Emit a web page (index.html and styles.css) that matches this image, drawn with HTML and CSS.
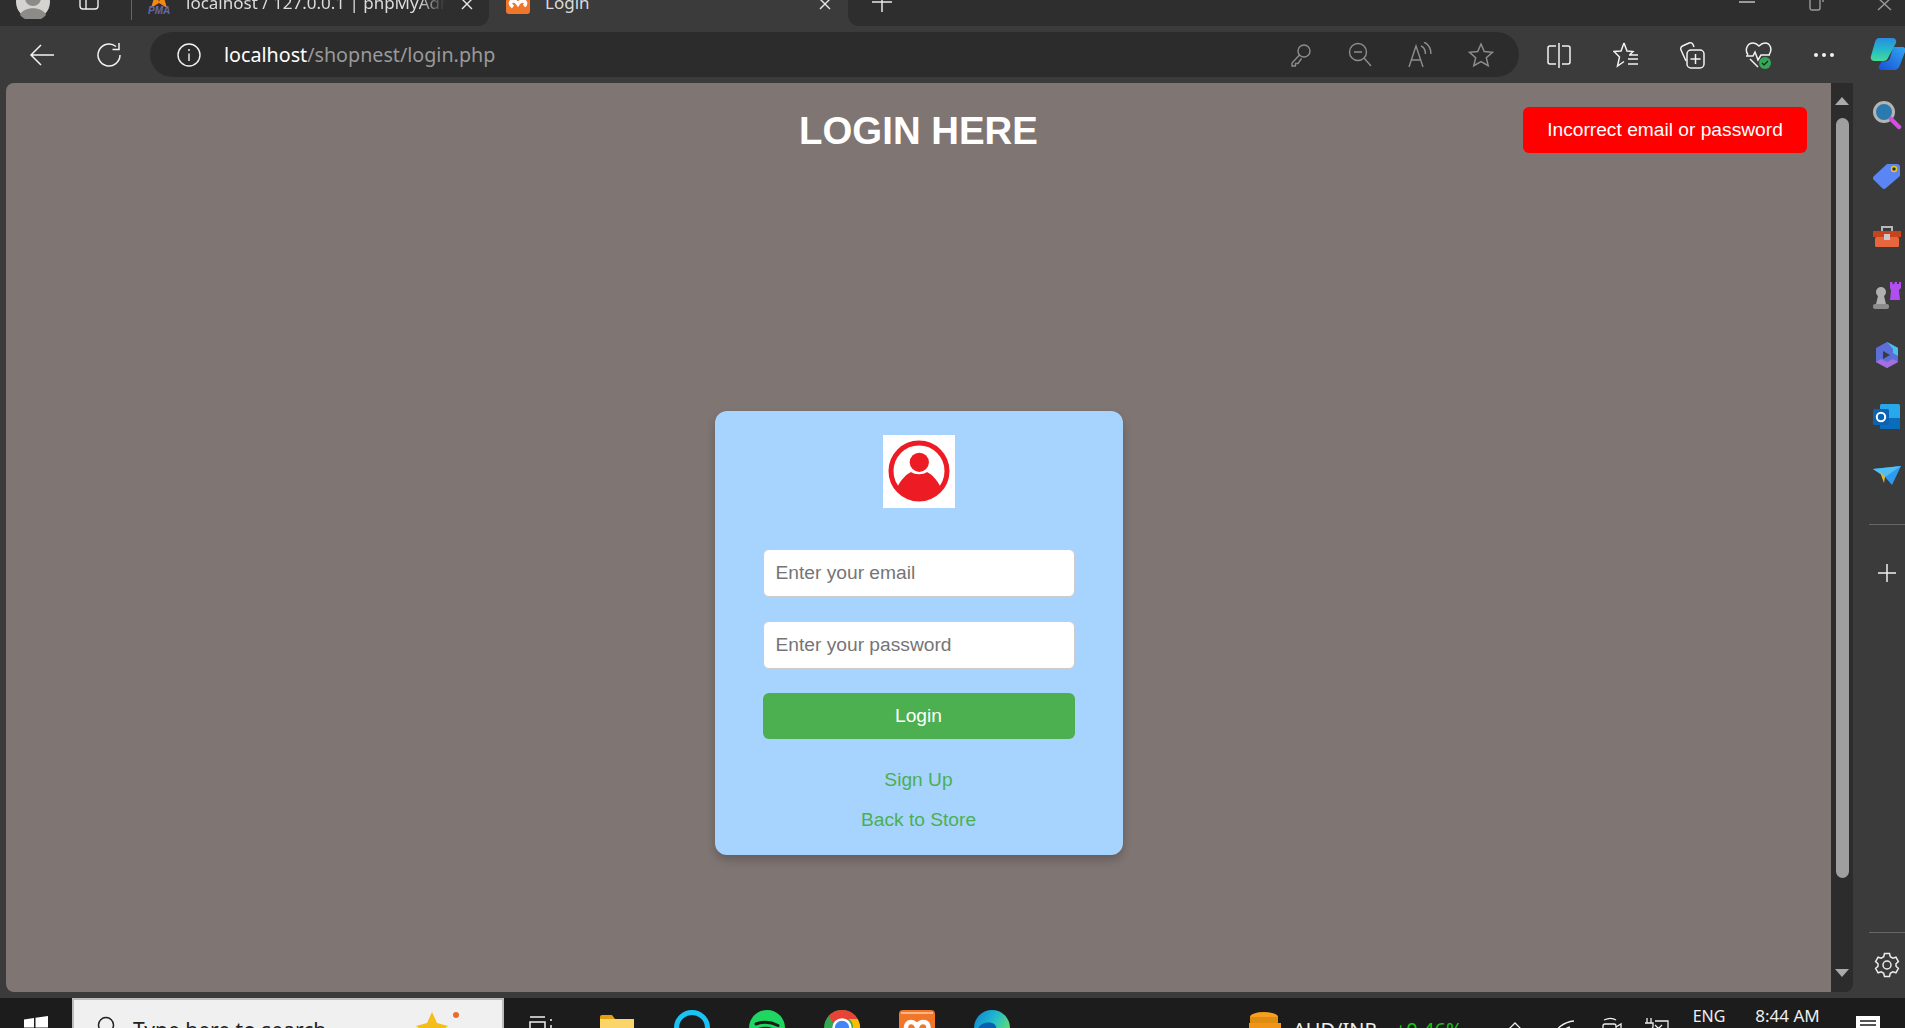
FILE: index.html
```html
<!DOCTYPE html>
<html lang="en">
<head>
<meta charset="utf-8">
<title>Login</title>
<link rel="stylesheet" href="styles.css">
</head>
<body>
<div class="tabstrip">
  <svg class="avatar" width="34" height="34" viewBox="0 0 34 34"><circle cx="17" cy="17" r="17" fill="#d5d3cf"/><circle cx="17" cy="13" r="8" fill="#8d8b87"/><path d="M4 30c3-9 23-9 26 0a17 17 0 0 1-26 0z" fill="#8d8b87"/></svg>
  <svg class="tabs-icon" width="20" height="24" viewBox="0 0 20 24" fill="none" stroke="#eee" stroke-width="1.4"><rect x="1" y="1" width="18" height="22" rx="3"/><path d="M7 1v22"/></svg>
  <span class="tab-sep"></span>
  <div class="tab tab-back">
    <svg class="tab-icon" width="24" height="24" viewBox="0 0 24 24"><path d="M4 18 9 1l3 11 3-11 5 17-8-5z" fill="#f08a12"/><text x="1" y="23.500" class="pma-text">PMA</text></svg>
    <span class="tab-title">localhost / 127.0.0.1 | phpMyAdmin</span>
    <svg class="tab-close" width="14" height="14" viewBox="0 0 14 14" stroke="#e8e8e8" stroke-width="1.4"><path d="M2 2l10 10M12 2 2 12"/></svg>
  </div>
  <div class="tab tab-active">
    <svg class="tab-icon" width="24" height="24" viewBox="0 0 24 24"><rect width="24" height="24" rx="3" fill="#f0762a"/><path d="M7 17C3 14 4 11 7.500 11c2 0 3.500 1.500 4.500 3 1-1.500 2.500-3 4.500-3 3.500 0 4 3 1.500 5" fill="none" stroke="#fff" stroke-width="3.500"/></svg>
    <span class="tab-title">Login</span>
    <svg class="tab-close" width="14" height="14" viewBox="0 0 14 14" stroke="#e8e8e8" stroke-width="1.4"><path d="M2 2l10 10M12 2 2 12"/></svg>
  </div>
  <svg class="new-tab" width="22" height="22" viewBox="0 0 22 22" stroke="#e8e8e8" stroke-width="1.5"><path d="M11 1v20M1 11h20"/></svg>
  <div class="window-controls">
    <svg width="16" height="4" viewBox="0 0 16 4"><path d="M0 2h16" stroke="#9a9a9a" stroke-width="2"/></svg>
    <svg class="win-max" width="16" height="12" viewBox="0 0 16 12" fill="none" stroke="#9a9a9a" stroke-width="1.4"><rect x="1" y="-8" width="10" height="18" rx="2"/><path d="M14 -6v8"/></svg>
    <svg class="win-close" width="16" height="12" viewBox="0 0 16 12" stroke="#9a9a9a" stroke-width="1.4"><path d="M1 -2 14 10M14 -2 1 10"/></svg>
  </div>
</div>

<div class="toolbar">
  <svg class="nav-back" width="26" height="24" viewBox="0 0 26 24" fill="none" stroke="#f2f2f2" stroke-width="1.5"><path d="M25 12H2M12 2 2 12l10 10"/></svg>
  <svg class="nav-reload" width="26" height="26" viewBox="0 0 26 26" fill="none" stroke="#f2f2f2" stroke-width="1.5"><path d="M24 13a11 11 0 1 1-4-8.500"/><path d="M23 1v6.500h-6.500"/></svg>
  <div class="addressbar">
    <svg class="info" width="24" height="24" viewBox="0 0 24 24" fill="none" stroke="#f2f2f2" stroke-width="1.4"><circle cx="12" cy="12" r="11"/><path d="M12 10.500v7.500M12 6v2"/></svg>
    <span class="url"><span class="url-host">localhost</span>/shopnest/login.php</span>
    <div class="addr-icons">
      <svg width="24" height="26" viewBox="0 0 24 26" fill="none" stroke="#8d8d8d" stroke-width="1.4"><circle cx="16" cy="9" r="6"/><path d="M11.500 13 4 21v3h3.500v-2.500H10l3.500-5M18 7h.1"/></svg>
      <svg width="24" height="26" viewBox="0 0 24 26" fill="none" stroke="#8d8d8d" stroke-width="1.4"><circle cx="10" cy="10" r="8.500"/><path d="M16 16l7 8M6 10h8"/></svg>
      <svg width="24" height="26" viewBox="0 0 24 26" fill="none" stroke="#8d8d8d" stroke-width="1.4"><path d="M1 25 8 4l7 21M3.500 18h9M13 4c2.500 1 4.500 4 4.500 8M16 0c4 2 7 6 7 12"/></svg>
      <svg width="26" height="26" viewBox="0 0 26 26" fill="none" stroke="#8d8d8d" stroke-width="1.500"><path d="M13 2l3.300 7.500 8.200.8-6.200 5.400 1.900 8L13 19.500 5.800 23.700l1.900-8L1.500 10.300l8.200-.8z"/></svg>
    </div>
  </div>
  <svg class="tool-split" width="26" height="26" viewBox="0 0 26 26" fill="none" stroke="#f2f2f2" stroke-width="1.500"><path d="M10 4H4a2 2 0 0 0-2 2v14a2 2 0 0 0 2 2h6M16 4h6a2 2 0 0 1 2 2v14a2 2 0 0 1-2 2h-6M13 1v25"/></svg>
  <svg class="tool" width="26" height="28" viewBox="0 0 26 28" fill="none" stroke="#f2f2f2" stroke-width="1.500"><path d="M11 2l3 8 6 .5-3 3M11 2 8 10l-7 .500 5.500 5.500L4.500 25l6.500-4.500M16 14h9M15 18h10M15 23h10"/></svg>
  <svg class="tool tool-coll" width="26" height="28" viewBox="0 0 26 28" fill="none" stroke="#f2f2f2" stroke-width="1.500"><path d="M7 20 2 9a3 3 0 0 1 1.500-4L10 2a3 3 0 0 1 4 1.500L15 6"/><rect x="8" y="9" width="17" height="18" rx="4"/><path d="M16.500 13v10M11.500 18h10"/></svg>
  <svg class="tool tool-heart" width="28" height="28" viewBox="0 0 28 28" fill="none"><path d="M3 14C-1 8 3 2 8 2c3 0 5 2 6 3 1-1 3-3 6-3 5 0 8 6 4 12M1 15h7l2-4 3 8 3-5h9M5 18l8 8" stroke="#f2f2f2" stroke-width="1.500"/><circle cx="20" cy="22" r="6" fill="#34a853"/><path d="M17 22l2 2 4-4" stroke="#123" stroke-width="1.200"/></svg>
  <svg class="tool-dots" width="22" height="6" viewBox="0 0 22 6" fill="#f2f2f2"><circle cx="3" cy="3" r="2"/><circle cx="11" cy="3" r="2"/><circle cx="19" cy="3" r="2"/></svg>
  <svg class="copilot" width="36" height="33" viewBox="0 0 36 33"><defs><linearGradient id="cpa" x1="0" y1="0" x2="0" y2="1"><stop offset="0" stop-color="#2a8be0"/><stop offset=".5" stop-color="#25b8cc"/><stop offset="1" stop-color="#45dc96"/></linearGradient><linearGradient id="cpb" x1="0" y1="1" x2="1" y2="0"><stop offset="0" stop-color="#1a4fd8"/><stop offset="1" stop-color="#30a8f0"/></linearGradient></defs><path d="M9 0h13c3 0 5 2 4 5L18 20c-1 2-2 3-5 3H5c-3 0-5-2-4-5L5 4c.6-2 2-4 4-4z" fill="url(#cpa)"/><path d="M24 9h8c3 0 4 2 3 5l-5 13c-1 3-3 5-6 5H12c-3 0-4-2-3-4l3-5c4 1 7 0 8-3l2-7c.5-2 1-4 2-4z" fill="url(#cpb)"/></svg>
</div>

<div class="main-row">
  <main class="page">
    <div class="alert">Incorrect email or password</div>
    <h1 class="page-title">LOGIN HERE</h1>
    <form class="card">
      <svg class="logo" width="72" height="73" viewBox="0 0 72 73"><rect width="72" height="73" fill="#fff"/><circle cx="36" cy="36" r="28" fill="none" stroke="#ed1c24" stroke-width="5"/><circle cx="36.300" cy="27.300" r="9.600" fill="#ed1c24"/><path d="M14 53c4-9 10-14 14-16 4 3 12 3 16 0 4 2 10 7 14 16-4 7-13 11-22 11s-18-4-22-11z" fill="#ed1c24"/></svg>
      <input class="field" type="email" placeholder="Enter your email">
      <input class="field" type="password" placeholder="Enter your password">
      <button class="submit" type="button">Login</button>
      <a class="card-link first" href="#">Sign Up</a>
      <a class="card-link" href="#">Back to Store</a>
    </form>
  </main>
  <div class="scrollbar">
    <span class="arrow-up"></span>
    <span class="thumb"></span>
    <span class="arrow-down"></span>
  </div>
  <aside class="sidebar">
    <svg width="30" height="30" viewBox="0 0 30 30"><circle cx="12" cy="12" r="9.500" fill="#2a7ab0" stroke="#b4b4b4" stroke-width="3"/><path d="M19 19l8 8" stroke="#d050e0" stroke-width="4.500" stroke-linecap="round"/></svg>
    <svg width="30" height="30" viewBox="0 0 30 30"><path d="M15 4h10a3 3 0 0 1 3 3v9L14 28a3 3 0 0 1-4 0L2 20a2.500 2.500 0 0 1 0-4z" fill="#5a85f5"/><circle cx="22" cy="9" r="2.500" fill="#333" stroke="#f5c518" stroke-width="1.500"/></svg>
    <svg width="30" height="30" viewBox="0 0 30 30"><g transform="translate(0 3)"><path d="M10 8V4h10v4" fill="none" stroke="#b8b8b8" stroke-width="2"/><rect x="1" y="8" width="28" height="6" fill="#c8431c"/><rect x="3" y="14" width="24" height="10" rx="1.500" fill="#e8663c"/><rect x="12" y="11" width="6" height="6" fill="#c8c8c8"/></g></svg>
    <svg width="30" height="30" viewBox="0 0 30 30"><path d="M18 2h2.500v2h2V2h2.500v2h2V2H29v6l-2 2 1 10H18l1-10-1-2z" fill="#b04ef0"/><circle cx="9" cy="12" r="5" fill="#b0b0b0"/><path d="M6 16h6l2 8H4z" fill="#b0b0b0"/><rect x="1" y="24" width="16" height="5" rx="2" fill="#8c8c8c"/></svg>
    <svg width="30" height="30" viewBox="0 0 30 30"><path d="M15 2l11 6v14l-11 6L4 22V8z" fill="#5c6fd8"/><path d="M15 2l11 6v8l-5-3V9z" fill="#45c2ea"/><path d="M4 22l11 6 11-6-5-3-6 3-6-3z" fill="#a56fe0"/><path d="M11 11l7 4-7 4z" fill="#3b3b3b"/></svg>
    <svg width="30" height="30" viewBox="0 0 30 30"><g transform="translate(0 2)"><rect x="8" y="2" width="20" height="25" rx="1.500" fill="#28a8ea"/><path d="M8 16h20v11H8z" fill="#0a6cbd"/><rect x="1" y="7" width="16" height="16" rx="1.500" fill="#0a62b0"/><circle cx="9" cy="15" r="4.200" fill="none" stroke="#fff" stroke-width="2"/></g></svg>
    <svg width="30" height="30" viewBox="0 0 30 30"><path d="M1 9l28-3-9 19-7-8z" fill="#2e9bf0"/><path d="M1 9l12 8 16-11z" fill="#4fc0f5"/><path d="M8 12l5 5-1 6z" fill="#f5b51c"/></svg>
    <span class="side-rule"></span>
    <svg class="side-plus" width="20" height="20" viewBox="0 0 20 20" stroke="#f0f0f0" stroke-width="1.500"><path d="M10 1v18M1 10h18"/></svg>
    <span class="side-rule side-rule-low"></span>
    <svg class="side-gear" width="26" height="26" viewBox="0 0 26 26" fill="none" stroke="#ededed" stroke-width="1.500"><circle cx="13" cy="13" r="4"/><path d="M10.500 1.500h5l.8 3.200 2.500 1.400 3.100-.9 2.500 4.300-2.400 2.300v2.400l2.400 2.300-2.500 4.300-3.100-.9-2.500 1.400-.8 3.200h-5l-.8-3.200-2.500-1.400-3.100.9-2.500-4.300 2.400-2.300v-2.400L1.600 9.500l2.500-4.300 3.100.9 2.500-1.400z"/></svg>
  </aside>
</div>
<div class="bottom-strip"></div>

<footer class="taskbar">
  <svg class="tb-win" width="24" height="24" viewBox="0 0 24 24" fill="#fff"><path d="M0 3.500 10 2v9.500H0zM11.500 1.800 24 0v11.500H11.500zM0 13h10v9.500L0 21zM11.500 13H24v11l-12.500-1.800z"/></svg>
  <div class="tb-search">
    <svg class="tb-mag" width="20" height="22" viewBox="0 0 20 22" fill="none" stroke="#222" stroke-width="1.500"><circle cx="9" cy="9" r="7.500"/><path d="M4 15l-3 5"/></svg>
    <span class="tb-search-text">Type here to search</span>
    <svg class="tb-star" width="50" height="30" viewBox="0 0 50 30"><path d="M18 1l5 11 11 3-8 6 2 9H8l2-9-8-6 11-3z" fill="#f5bd1a"/><circle cx="42" cy="4" r="3" fill="#ea6a2a"/><path d="M47 20l2 6h-5z" fill="#f5bd1a"/></svg>
  </div>
  <svg class="tb-taskview" width="24" height="22" viewBox="0 0 24 22" fill="none" stroke="#f0f0f0" stroke-width="1.500"><path d="M1 1h15M1 6h15v14H1zM22 3v2M22 9v3"/></svg>
  <svg class="tb-folder" width="34" height="24" viewBox="0 0 34 24"><path d="M0 2a2 2 0 0 1 2-2h10l3 4H0z" fill="#e0a010"/><rect y="4" width="34" height="20" fill="#fbd569"/></svg>
  <svg class="tb-cortana" width="36" height="36" viewBox="0 0 36 36" fill="none"><circle cx="18" cy="18" r="15.500" stroke="#19c3f5" stroke-width="5"/></svg>
  <svg class="tb-app" width="36" height="36" viewBox="0 0 36 36"><circle cx="18" cy="18" r="18" fill="#1ed760"/><path d="M7 14c7-2.500 15-2 22 1.500M9 19.500c6-2 12-1.500 18 1.500M10 25c5-1.500 10-1 15 1" fill="none" stroke="#1c1c1c" stroke-width="3" stroke-linecap="round"/></svg>
  <svg class="tb-app" width="36" height="36" viewBox="0 0 36 36"><circle cx="18" cy="18" r="18" fill="#34a853"/><path d="M18 0a18 18 0 0 1 15.600 9H18a9 9 0 0 0-8 5L4.500 6A18 18 0 0 1 18 0z" fill="#ea4335"/><path d="M33.600 9A18 18 0 0 1 18 36l8-13a9 9 0 0 0-1-14z" fill="#fbbc04"/><circle cx="18" cy="18" r="8.500" fill="#4285f4" stroke="#fff" stroke-width="2.500"/></svg>
  <svg class="tb-app" width="36" height="36" viewBox="0 0 36 36"><rect width="36" height="36" rx="4" fill="#f0762a"/><path d="M2 3h32" stroke="#f9b68a" stroke-width="2"/><path d="M11 25C5 21 6 12 12 12c3 0 5 2 6 5 1-3 3-5 6-5 6 0 7 7 3 9 4 2 3 9-3 9" fill="none" stroke="#fff" stroke-width="4.500"/></svg>
  <svg class="tb-app" width="36" height="36" viewBox="0 0 36 36"><defs><linearGradient id="edg" x1="0" y1="0" x2="1" y2=".6"><stop offset="0" stop-color="#0f7fd0"/><stop offset=".5" stop-color="#1fb8d0"/><stop offset="1" stop-color="#6ee06a"/></linearGradient></defs><circle cx="18" cy="18" r="18" fill="url(#edg)"/><path d="M2 26C2 15 11 11 18 13c4 1 5 5 4 7-3 3-8 1-8 5 0 5 6 8 12 7-3 3-8 4-12 3-5-1-10-4-12-9z" fill="#0b5fb0"/></svg>
  <svg class="tb-coins" width="36" height="28" viewBox="0 0 36 28"><ellipse cx="17" cy="5" rx="14" ry="5" fill="#f7a020"/><path d="M3 5v6c4 3 24 3 28 0V5z" fill="#e08c10"/><path d="M2 11h32v10H2zM6 21h24v7H6z" fill="#f09518"/></svg>
  <span class="tb-pair">AUD/INR</span>
  <span class="tb-change">+0.46%</span>
  <svg class="tb-chevron" width="14" height="8" viewBox="0 0 14 8" fill="none" stroke="#eee" stroke-width="1.300"><path d="M1 7l6-6 6 6"/></svg>
  <svg class="tb-wifi" width="22" height="16" viewBox="0 0 22 16" fill="none" stroke="#eee" stroke-width="1.300"><path d="M1 16C3 8 11 2 21 1M7 16c1-4 5-8 10-9"/></svg>
  <svg class="tb-meet" width="22" height="20" viewBox="0 0 22 20" fill="none" stroke="#eee" stroke-width="1.300"><path d="M3 3c4-2 9-2 12 0"/><rect x="2" y="7" width="13" height="13" rx="2"/><path d="M15 10l5-3v9"/></svg>
  <svg class="tb-power" width="24" height="14" viewBox="0 0 24 14" fill="none" stroke="#eee" stroke-width="1.300"><path d="M2 0v5M6 0v5M0 5h8v4l-2 3M10 3h13v11M10 7l6 6M17 7l-6 6"/></svg>
  <div class="tb-eng">ENG</div>
  <div class="tb-time">8:44 AM</div>
  <svg class="tb-notify" width="24" height="12" viewBox="0 0 24 12"><rect width="24" height="12" fill="#fff"/><path d="M4 5h16M4 9h16" stroke="#1c1c1c" stroke-width="1.300"/></svg>
</footer>
</body>
</html>
```
FILE: styles.css
```css
* { box-sizing: border-box; }
html, body { height: 100%; }
body {
  margin: 0;
  overflow: hidden;
  display: flex;
  flex-direction: column;
  background: #3b3b3b;
  font-family: "Liberation Sans", Arial, sans-serif;
}
svg { display: block; flex: none; }

/* tab strip, cropped at the top of the picture */
.tabstrip {
  height: 26px;
  flex: none;
  display: flex;
  align-items: flex-start;
  background: #2e2e2e;
  overflow: hidden;
  padding-left: 16px;
}
.avatar { margin-top: -15px; }
.tabs-icon { margin: -14px 0 0 29px; }
.tab-sep { width: 1px; height: 26px; margin: -6px 0 0 32px; background: #666; }
.tab {
  position: relative;
  display: flex;
  align-items: center;
  height: 26px;
  font-family: "Noto Sans", sans-serif;
  font-size: 17px;
  color: #dcdcdc;
}
.tab-back { width: 357px; padding-left: 15px; }
.tab-active { width: 359px; padding-left: 17px; background: #3b3b3b; }
.tab-active::before, .tab-active::after {
  content: "";
  position: absolute;
  bottom: 0;
  width: 10px;
  height: 10px;
}
.tab-active::before { left: -10px; background: radial-gradient(circle at 0 0, #2e2e2e 9.5px, #3b3b3b 10px); }
.tab-active::after { right: -10px; background: radial-gradient(circle at 100% 0, #2e2e2e 9.5px, #3b3b3b 10px); }
.tab-icon { margin-top: -22px; }
.pma-text { font: italic bold 10px "Liberation Sans", sans-serif; fill: #6468ac; }
.tab-title {
  flex: 1;
  margin: -20px 0 0 15px;
  white-space: nowrap;
  overflow: hidden;
  line-height: 20px;
}
.tab-back .tab-title {
  flex: none;
  width: 259px;
  -webkit-mask-image: linear-gradient(90deg, #000 90%, transparent);
  mask-image: linear-gradient(90deg, #000 90%, transparent);
}
.tab-close { margin: -19px 16px 0 0; }
.tab-back .tab-close { margin-left: 15px; }
.new-tab { margin: -9px 0 0 23px; }
.window-controls { margin-left: auto; display: flex; align-items: flex-start; padding-right: 12px; }
.win-max { margin-left: 54px; }
.win-close { margin-left: 52px; }

/* toolbar */
.toolbar {
  height: 57px;
  flex: none;
  display: flex;
  align-items: center;
  background: #3b3b3b;
  padding-left: 29px;
}
.nav-back { margin-right: 41px; }
.nav-reload { margin-right: 28px; }
.addressbar {
  width: 1369px;
  height: 45px;
  flex: none;
  display: flex;
  align-items: center;
  padding: 0 25px 0 27px;
  background: #2c2c2c;
  border-radius: 23px;
}
.url {
  margin-left: 23px;
  font-family: "Noto Sans", sans-serif;
  font-size: 19.7px;
  color: #9a9a9a;
  white-space: nowrap;
}
.url-host { color: #fff; }
.addr-icons { margin-left: auto; display: flex; align-items: center; gap: 36px; }
.tool-split { margin-left: 27px; }
.tool { margin-left: 41px; }
.tool.tool-coll { margin-left: 40px; }
.tool.tool-heart { margin-left: 40px; }
.tool-dots { margin-left: 40px; }
.copilot { margin-left: 35px; }

/* main row */
.main-row { flex: 1; min-height: 0; display: flex; padding-left: 6px; }
.page {
  position: relative;
  width: 1825px;
  background: #7f7573;
  border-radius: 8px 0 0 8px;
}
.page-title {
  margin: 26px 0 0;
  font-size: 38.4px;
  line-height: 44px;
  text-align: center;
  color: #fff;
}
.alert {
  position: absolute;
  top: 24px;
  right: 24px;
  width: 284px;
  height: 46px;
  line-height: 46px;
  text-align: center;
  font-size: 19.2px;
  color: #fff;
  background: #f00;
  border-radius: 6px;
}
.card {
  width: 408px;
  height: 444px;
  margin: 258px auto 0;
  padding: 24px 48px 0;
  display: flex;
  flex-direction: column;
  align-items: center;
  background: #a6d4ff;
  border-radius: 12px;
  box-shadow: 0 5px 10px rgba(0, 0, 0, 0.2);
}
.logo { margin-bottom: 41px; }
.field {
  width: 100%;
  height: 48px;
  margin-bottom: 24px;
  padding: 0 12px;
  flex: none;
  font: 19.2px "Liberation Sans", Arial, sans-serif;
  background: #fff;
  border: 1px solid #ccc;
  border-radius: 6px;
}
.field::placeholder { color: #757575; opacity: 1; }
.submit {
  width: 100%;
  height: 46px;
  flex: none;
  font: 19.2px "Liberation Sans", Arial, sans-serif;
  color: #fff;
  background: #4caf50;
  border: 0;
  border-radius: 6px;
}
.card-link {
  margin-top: 18px;
  font-size: 19.2px;
  line-height: 22px;
  color: #4caf50;
  text-decoration: none;
}
.card-link.first { margin-top: 30px; }

/* page scrollbar */
.scrollbar {
  width: 22px;
  flex: none;
  display: flex;
  flex-direction: column;
  align-items: center;
  background: #2c2c2c;
  border-radius: 0 0 8px 0;
}
.arrow-up {
  margin-top: 14px;
  border: 7.500px solid transparent;
  border-top: 0;
  border-bottom: 8px solid #aaa;
}
.thumb { width: 13px; height: 760px; margin-top: 13px; background: #9f9f9f; border-radius: 7px; flex: none; }
.arrow-down {
  margin-top: 91px;
  border: 7.500px solid transparent;
  border-bottom: 0;
  border-top: 8px solid #aaa;
}

/* sidebar */
.sidebar {
  flex: 1;
  display: flex;
  flex-direction: column;
  align-items: center;
  padding: 17px 0 0 16px;
  gap: 30px;
}
.side-rule { width: 100%; height: 1px; margin: 4px 0 0 0; background: #666; align-self: stretch; flex: none; }
.side-plus { margin-top: 8px; }
.side-rule-low { margin-top: 319px; }
.side-gear { margin-top: -11px; }

.bottom-strip { height: 6px; flex: none; background: #3b3b3b; }

/* windows taskbar, cropped at the bottom of the picture */
.taskbar {
  height: 30px;
  flex: none;
  display: flex;
  align-items: flex-start;
  overflow: hidden;
  padding-left: 24px;
  background: #1c1c1c;
}
.tb-win { margin-top: 18px; }
.tb-search {
  width: 432px;
  height: 40px;
  margin-left: 24px;
  display: flex;
  align-items: flex-start;
  background: #f0f0f0;
  border: 2px solid #bdbdbd;
  border-bottom: 0;
  flex: none;
}
.tb-mag { margin: 16px 0 0 23px; }
.tb-search-text { margin: 18px 0 0 16px; font: 21px "Noto Sans", sans-serif; line-height: 24px; color: #222; white-space: nowrap; }
.tb-star { margin: 11px 38px 0 auto; }
.tb-taskview { margin: 18px 0 0 25px; }
.tb-folder { margin: 17px 0 0 47px; }
.tb-cortana { margin: 12px 0 0 40px; }
.tb-app { margin: 12px 0 0 39px; }
.tb-coins { margin: 14px 0 0 237px; }
.tb-pair { margin: 20px 0 0 10px; font: 20px "Noto Sans", sans-serif; line-height: 24px; color: #eee; white-space: nowrap; }
.tb-change { margin: 20px 0 0 18px; font: 20px "Noto Sans", sans-serif; line-height: 24px; color: #17c217; white-space: nowrap; }
.tb-chevron { margin: 24px 0 0 45px; }
.tb-wifi { margin: 22px 0 0 31px; }
.tb-meet { margin: 19px 0 0 26px; }
.tb-power { margin: 20px 0 0 22px; }
.tb-eng { margin: 7px 0 0 24px; font: 16px "Noto Sans", sans-serif; line-height: 22px; color: #eee; }
.tb-time { margin: 7px 0 0 30px; font: 17px "Noto Sans", sans-serif; line-height: 22px; color: #eee; white-space: nowrap; }
.tb-notify { margin: 18px 0 0 36px; }
```
